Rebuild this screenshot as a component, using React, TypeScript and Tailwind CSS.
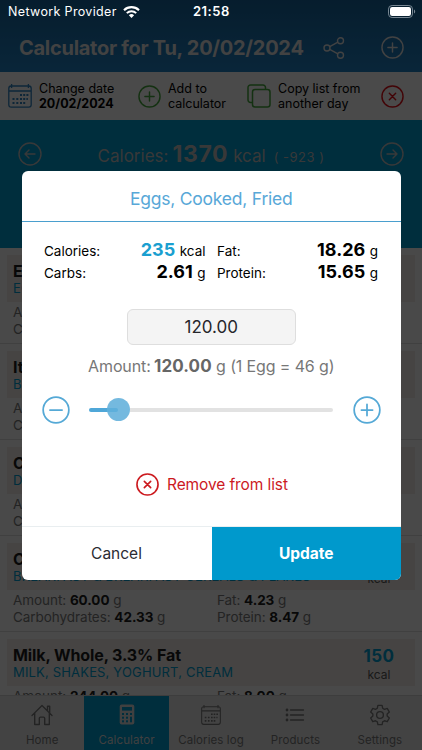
import { useState } from "react";

const foods = [
  { name: "Eggs, Cooked, Fried", group: "EGGS", kcal: "235", amount: "120.00", carbs: "2.61", fat: "18.26", protein: "15.65" },
  { name: "Italian Bread", group: "BREAD", kcal: "271", amount: "100.00", carbs: "50.00", fat: "3.50", protein: "8.80" },
  { name: "Cheese, Cheddar", group: "DAIRY", kcal: "201", amount: "50.00", carbs: "0.64", fat: "16.57", protein: "12.45" },
  { name: "Cereals, Oats", group: "BREAKFAST & BREAKFAST CEREALS & FLAKES", kcal: "227", amount: "60.00", carbs: "42.33", fat: "4.23", protein: "8.47" },
  { name: "Milk, Whole, 3.3% Fat", group: "MILK, SHAKES, YOGHURT, CREAM", kcal: "150", amount: "244.00", carbs: "11.03", fat: "8.00", protein: "7.86" },
];

function CircleIcon({ size, d, className, width = 1.5 }: { size: number; d: string; className?: string; width?: number }) {
  return (
    <svg width={size} height={size} viewBox="0 0 24 24" fill="none" stroke="currentColor" strokeWidth={width} strokeLinecap="round" strokeLinejoin="round" className={className}>
      <circle cx="12" cy="12" r="11" />
      <path d={d} />
    </svg>
  );
}

const PLUS = "M12 7.2v9.6M7.2 12h9.6";
const MINUS = "M6.8 12h10.4";
const CROSS = "M8.7 8.7l6.6 6.6M15.3 8.7l-6.6 6.6";
const LEFT = "M17 12H7M11 8l-4 4 4 4";
const RIGHT = "M7 12h10M13 8l4 4-4 4";

function CalendarIcon({ size, className }: { size: number; className?: string }) {
  return (
    <svg width={size} height={size} viewBox="0 0 24 24" fill="none" stroke="currentColor" className={className}>
      <rect x="0.8" y="2" width="22.4" height="21.2" rx="2.4" strokeWidth="1.3" />
      <path d="M1 7h22M3.6 0v4M20.4 0v4" strokeWidth="1.3" />
      <path d="M12 11h2M15.2 11h2M18.4 11h2M8.3 15h2M12 15h2M15.2 15h2M18.4 15h1.5M4.5 15h2M4.5 19h2M8.3 19h2M12 19h2M15.2 19h2" strokeWidth="1.9" />
    </svg>
  );
}

function StatusBar() {
  return (
    <div className="absolute inset-x-0 top-0 h-6 flex items-center text-white text-[12.5px]">
      <span className="ml-2 w-[110px] tracking-[0.35px] whitespace-nowrap">Network Provider</span>
      <svg width="17" height="12" viewBox="0 0 17 12" fill="none" stroke="currentColor" className="ml-[5px]">
        <path d="M1 4.2a10.8 10.8 0 0 1 15 0" strokeWidth="2.1" />
        <path d="M3.8 7.1a6.8 6.8 0 0 1 9.4 0" strokeWidth="2" />
        <path d="M8.5 12L5.9 9.3a3.8 3.8 0 0 1 5.2 0z" fill="currentColor" stroke="none" />
      </svg>
      <span className="ml-[53px] font-semibold text-[13px] tracking-[0.5px]">21:58</span>
      <svg width="28" height="13" viewBox="0 0 28 13" fill="none" className="ml-auto mr-[6px] -mt-px">
        <rect x="0.5" y="0.5" width="24" height="12" rx="3.6" stroke="#788793" />
        <rect x="2" y="2" width="21" height="9" rx="2.2" fill="white" />
        <path d="M26 4.5c1.6.6 1.6 3.4 0 4z" fill="#788793" />
      </svg>
    </div>
  );
}

function FoodRow({ food }: { food: (typeof foods)[0] }) {
  return (
    <div className="h-24 shrink-0 border-b border-[#d5d5d5] bg-[#f4f4f4] px-[7px] pt-[7px]">
      <div className="h-[47px] bg-[#eae4e0] flex justify-between pl-[6px] pr-[7px]">
        <div className="pt-[7px] whitespace-nowrap">
          <p className="text-[16px] leading-[18px] font-bold text-[#1c1c1c] tracking-[-0.1px]">{food.name}</p>
          <p className="text-[13px] leading-[17px] text-[#0099cc] tracking-[0.17px]">{food.group}</p>
        </div>
        <div className="w-[58px] text-center pt-[7px]">
          <p className="text-[17px] leading-[20px] font-bold text-[#0099cc] tracking-[0.5px]">{food.kcal}</p>
          <p className="text-[12px] leading-[17px] text-[#555]">kcal</p>
        </div>
      </div>
      <div className="flex pl-[6px] pt-[2px] text-[13.5px] leading-[16.5px] text-[#777] tracking-[-0.05px]">
        <div className="w-[204px]">
          <p>Amount: <b className="text-[#1c1c1c]">{food.amount}</b> g</p>
          <p>Carbohydrates: <b className="text-[#1c1c1c]">{food.carbs}</b> g</p>
        </div>
        <div>
          <p>Fat: <b className="text-[#1c1c1c]">{food.fat}</b> g</p>
          <p>Protein: <b className="text-[#1c1c1c]">{food.protein}</b> g</p>
        </div>
      </div>
    </div>
  );
}

function HomeIcon() {
  return (
    <svg width="22" height="22" viewBox="0 0 22 22" fill="none" stroke="currentColor" strokeWidth="1.4" strokeLinejoin="round" strokeLinecap="round">
      <path d="M1 11.5L11 1.5l10 10M16.5 6.5V2.3h2.2v6.5M3.7 9.3v11.2h4.6v-6.2a1.2 1.2 0 0 1 1.2-1.2h3a1.2 1.2 0 0 1 1.2 1.2v6.2h4.6V9.3" />
    </svg>
  );
}

function CalculatorIcon() {
  return (
    <svg width="16" height="21" viewBox="0 0 16 21">
      <rect x="0.7" y="0.5" width="14.6" height="20" rx="2" fill="#d5d5d5" />
      <g fill="#0099cc">
        <rect x="3" y="3" width="10" height="3.6" />
        <rect x="3" y="9" width="2" height="2" />
        <rect x="7" y="9" width="2" height="2" />
        <rect x="11" y="9" width="2" height="2" />
        <rect x="3" y="12.7" width="2" height="2" />
        <rect x="7" y="12.7" width="2" height="2" />
        <rect x="11" y="12.7" width="2" height="5.6" />
        <rect x="3" y="16.3" width="2" height="2" />
        <rect x="7" y="16.3" width="2" height="2" />
      </g>
    </svg>
  );
}

function ListIcon() {
  return (
    <svg width="20" height="14" viewBox="0 0 20 14" stroke="currentColor" strokeLinecap="round">
      <path d="M5.5 2h13M5.5 7h13M5.5 12h13" strokeWidth="1.4" />
      <path d="M2 2h.01M2 7h.01M2 12h.01" strokeWidth="2.8" />
    </svg>
  );
}

function GearIcon() {
  return (
    <svg width="22" height="22" viewBox="0 0 24 24" fill="none" stroke="currentColor" strokeWidth="1.5" strokeLinejoin="round">
      <path d="M9.7 1.5h4.6l.6 3.1 2 1.2 3-1 2.3 4-2.4 2.1v2.3l2.4 2.1-2.3 4-3-1-2 1.2-.6 3H9.7l-.6-3-2-1.2-3 1-2.3-4 2.4-2.1v-2.3L1.8 8.8l2.3-4 3 1 2-1.2z" />
      <circle cx="12" cy="12" r="3.7" />
    </svg>
  );
}

function Tab({ icon, label, active }: { icon: React.ReactNode; label: string; active?: boolean }) {
  return (
    <div className={active ? "flex-1 bg-[#0099cc] text-[#d5d5d5]" : "flex-1 text-[#777]"}>
      <div className="h-[37px] flex items-center justify-center">{icon}</div>
      <p className="text-center text-[11.5px] leading-[15px] tracking-[0.1px] whitespace-nowrap">{label}</p>
    </div>
  );
}

function Modal() {
  const [amount, setAmount] = useState("120.00");

  return (
    <div className="absolute left-[21.5px] top-[171px] w-[379.5px] h-[409px] bg-white rounded-[6px] overflow-hidden flex flex-col text-black">
      <h2 className="h-[50px] shrink-0 flex items-center justify-center pt-[7px] text-[17.5px] text-[#58a8d8] tracking-[-0.22px]">
        Eggs, Cooked, Fried
      </h2>
      <div className="h-px shrink-0 bg-[#4a9fce]" />

      <div className="flex justify-between pt-[17px] pl-[22.5px] pr-[23px] text-[13.5px] leading-[22px]">
        <div className="w-[161.5px]">
          <p className="flex h-[22px] items-baseline"><span>Calories:</span><b className="ml-auto mr-[4.5px] text-[18px]/[22px] text-[#1a9fd0]">235</b>kcal</p>
          <p className="flex h-[22px] items-baseline"><span>Carbs:</span><b className="ml-auto mr-[4.5px] text-[18px]/[22px]">2.61</b>g</p>
        </div>
        <div className="w-[161px]">
          <p className="flex h-[22px] items-baseline"><span>Fat:</span><b className="ml-auto mr-[4.5px] text-[18px]/[22px]">18.26</b>g</p>
          <p className="flex h-[22px] items-baseline"><span>Protein:</span><b className="ml-auto mr-[4.5px] text-[18px]/[22px]">15.65</b>g</p>
        </div>
      </div>

      <input
        value={amount}
        onChange={(e) => setAmount(e.target.value)}
        className="mt-[26px] mx-auto w-[169px] h-9 shrink-0 rounded-[6px] border border-[#dedede] bg-[#f4f4f4] text-center text-[17px] text-[#26262b]"
      />

      <p className="mt-[9px] h-6 leading-6 text-center text-[16px] tracking-[-0.13px] text-[#777] whitespace-nowrap">
        Amount: <b className="-ml-px text-[17px] tracking-[0.1px] text-[#666]">120.00</b> g (1 Egg = 46 g)
      </p>

      <div className="mt-[17.5px] flex items-center h-7 pl-[20px] text-[#55a9d6]">
        <CircleIcon size={28} d={MINUS} width={1.5} />
        <div className="ml-[19.5px] w-[244px] flex items-center">
          <div className="w-[18px] h-1 rounded-l-full bg-[#4fa7d8]" />
          <div className="w-[22.5px] h-[22.5px] rounded-full bg-[#74b9df] flex items-center">
            <div className="w-[11px] h-1 rounded-r-full bg-[#5dafdb]" />
          </div>
          <div className="flex-1 h-1 rounded-r-full bg-[#e2e2e2]" />
        </div>
        <CircleIcon size={28} d={PLUS} width={1.5} className="ml-[19.5px]" />
      </div>

      <div className="mt-[49px] h-6 flex items-center pl-[114.5px] text-[#cc1a1f]">
        <CircleIcon size={23} d={CROSS} width={1.7} />
        <span className="ml-[8px] pt-px text-[15.5px] tracking-[-0.1px] whitespace-nowrap">Remove from list</span>
      </div>

      <div className="mt-auto h-[54px] shrink-0 flex border-t border-[#e9eef0] text-[15.5px]">
        <button className="w-[190px] pt-px text-[#2b2b33]">Cancel</button>
        <button className="flex-1 pt-px bg-[#0099cc] text-white font-bold">Update</button>
      </div>
    </div>
  );
}

export default function App() {
  return (
    <div className="relative w-[422px] h-[750px] overflow-hidden flex flex-col bg-[#f4f4f4] font-['Inter',sans-serif]">
      <header className="h-[72px] shrink-0 pt-[24px] bg-gradient-to-b from-[#156298] to-[#207fc0] text-[#dcdcdc]">
        <div className="h-[47px] flex items-center pl-[19px] pr-[18px]">
          <h1 className="w-[286px] text-[20px] font-bold tracking-[-0.28px] whitespace-nowrap">Calculator for Tu, 20/02/2024</h1>
          <svg width="22" height="22" viewBox="0 0 22 22" fill="none" stroke="currentColor" strokeWidth="1.4" className="ml-[18px]">
            <circle cx="4" cy="11" r="3" />
            <circle cx="17.5" cy="3.8" r="3" />
            <circle cx="17.5" cy="18.2" r="3" />
            <path d="M6.7 9.6l8.2-4.4M6.7 12.4l8.2 4.4" />
          </svg>
          <CircleIcon size={23} d={PLUS} className="ml-auto" />
        </div>
      </header>

      <div className="h-12 shrink-0 flex items-center bg-[#f7f7f7] pl-2 pr-[18px] text-[12.5px] leading-[15px] text-black whitespace-nowrap">
        <CalendarIcon size={24} className="text-[#2f81bd]" />
        <p className="ml-[7px] w-[99px]">Change date<br /><b>20/02/2024</b></p>
        <CircleIcon size={23} d={PLUS} className="text-[#45a53c]" />
        <p className="ml-[7px] w-[79px]">Add to<br />calculator</p>
        <svg width="24" height="24" viewBox="0 0 24 24" fill="none" stroke="#45a53c" strokeWidth="1.5" strokeLinejoin="round">
          <rect x="5.5" y="5.5" width="17.5" height="17.5" rx="2.5" />
          <path d="M5.5 18.5h-2A2.5 2.5 0 0 1 1 16V3.5A2.5 2.5 0 0 1 3.5 1H16a2.5 2.5 0 0 1 2.5 2.5v2" />
        </svg>
        <p className="ml-[7px]">Copy list from<br />another day</p>
        <CircleIcon size={23} d={CROSS} className="ml-auto text-[#dd1018]" />
      </div>

      <div className="h-[128px] shrink-0 bg-[#0099cc] text-[#bdbdbd]">
        <div className="h-[68px] flex items-center pl-[18px] pr-[18px]">
          <CircleIcon size={24} d={LEFT} width={1.4} />
          <p className="flex-1 flex items-baseline justify-center whitespace-nowrap text-[17px]">
            <span>Calories:</span>
            <b className="ml-[4px] text-[23px] tracking-[0.6px]">1370</b>
            <span className="ml-[5px]">kcal</span>
            <span className="ml-[8px] text-[13px] tracking-[0.5px]">( -923 )</span>
          </p>
          <CircleIcon size={24} d={RIGHT} width={1.4} />
        </div>
      </div>

      <main className="flex-1 min-h-0 overflow-hidden flex flex-col">
        {foods.map((food) => (
          <FoodRow key={food.name} food={food} />
        ))}
      </main>

      <nav className="h-[55px] shrink-0 border-t border-[#ccc] bg-[#e2e2e2] flex">
        <Tab icon={<HomeIcon />} label="Home" />
        <Tab icon={<CalculatorIcon />} label="Calculator" active />
        <Tab icon={<CalendarIcon size={20} />} label="Calories log" />
        <Tab icon={<ListIcon />} label="Products" />
        <Tab icon={<GearIcon />} label="Settings" />
      </nav>

      <div className="absolute inset-0 bg-black/70" />
      <StatusBar />
      <Modal />
    </div>
  );
}
